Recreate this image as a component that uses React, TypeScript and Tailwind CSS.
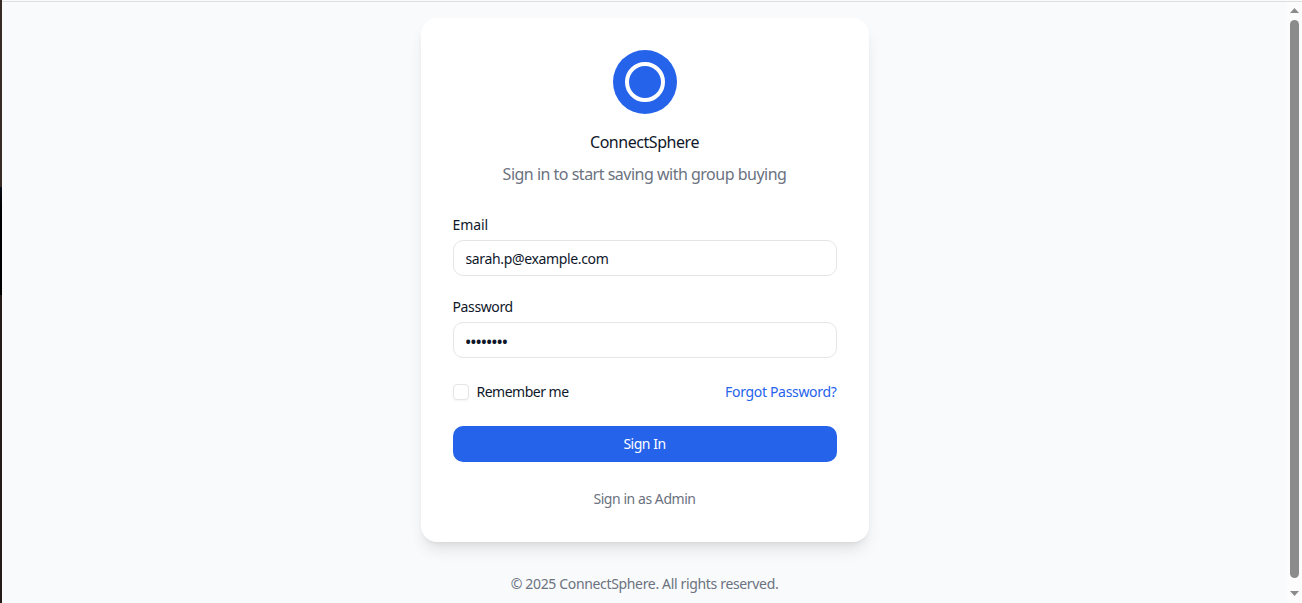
import { useState } from "react";

function ScrollBar() {
  return (
    <div className="flex h-full w-[15px] shrink-0 flex-col items-center bg-[#fcfcfc] pt-[6px]">
      <svg width="9" height="5" viewBox="0 0 9 5" className="shrink-0" fill="#8b8b8b">
        <path d="M4.5 0L9 5H0Z" />
      </svg>
      <div className="mt-[7px] h-[558px] w-[9px] shrink-0 rounded-full bg-[#8b8b8b]" />
      <svg width="9" height="5" viewBox="0 0 9 5" className="mt-[13px] shrink-0" fill="#8b8b8b">
        <path d="M0 0H9L4.5 5Z" />
      </svg>
    </div>
  );
}

type FieldProps = {
  id: string;
  label: string;
  type: string;
  initial: string;
  labelClass: string;
  inputClass: string;
};

function Field({ id, label, type, initial, labelClass, inputClass }: FieldProps) {
  const [value, setValue] = useState(initial);
  return (
    <div className="flex flex-col gap-2">
      <label htmlFor={id} className={`text-sm leading-[14px] ${labelClass}`}>
        {label}
      </label>
      <input
        id={id}
        type={type}
        value={value}
        onChange={(e) => setValue(e.target.value)}
        className={`h-9 w-full rounded-[10px] border border-[#e5e5e5] bg-white px-3 text-sm outline-none focus:border-[#2563eb] ${inputClass}`}
      />
    </div>
  );
}

export default function App() {
  return (
    <div className="flex h-[603px] w-full overflow-hidden bg-[#f9fafb] font-['Noto_Sans',sans-serif] text-[#0f172a]">
      <div className="flex w-[2px] shrink-0 flex-col bg-[#251c19]">
        <div className="h-[187px] bg-[#382a25]" />
        <div className="h-[108px] bg-linear-to-b from-[#0a0f18] to-black to-40%" />
      </div>
      <div className="flex min-w-0 flex-1 flex-col">
        <div className="h-[2px] shrink-0 border-b border-[#dedfe1] bg-[#fafafa]" />
        <div className="flex min-h-0 flex-1">
          <main className="flex min-w-0 flex-1 flex-col items-center pt-4">
            <section className="w-[448px] rounded-2xl bg-white p-8 shadow-lg">
              <header className="flex flex-col items-center">
                <div className="flex size-16 items-center justify-center rounded-full bg-[#2563eb]">
                  <div className="size-10 rounded-full border-4 border-white" />
                </div>
                <h1 className="mt-4 text-base tracking-[-0.45px]">ConnectSphere</h1>
                <p className="mt-2 text-base tracking-[-0.5px] text-[#6b7280]">
                  Sign in to start saving with group buying
                </p>
              </header>
              <form className="mt-8 flex flex-col gap-6" onSubmit={(e) => e.preventDefault()}>
                <Field
                  id="email"
                  label="Email"
                  type="email"
                  initial="sarah.p@example.com"
                  labelClass="tracking-[-0.1px]"
                  inputClass="pt-[5px] pb-1 tracking-[-0.35px]"
                />
                <Field
                  id="password"
                  label="Password"
                  type="password"
                  initial="password"
                  labelClass="tracking-[-0.38px]"
                  inputClass="pt-1.5 pb-1 font-bold"
                />
                <div className="flex h-5 items-center justify-between text-sm">
                  <label className="flex items-center gap-2 tracking-[-0.5px]">
                    <input
                      type="checkbox"
                      className="size-4 appearance-none rounded-[4px] border border-[#e5e5e5] bg-white shadow-xs checked:bg-[#2563eb]"
                    />
                    Remember me
                  </label>
                  <button type="button" className="tracking-[-0.32px] text-[#2563eb]">
                    Forgot Password?
                  </button>
                </div>
                <button
                  type="submit"
                  className="h-9 rounded-[10px] bg-[#2563eb] text-sm tracking-[-0.5px] text-white"
                >
                  Sign In
                </button>
              </form>
              <div className="mt-6 flex h-6 items-center justify-center pt-0.5">
                <button type="button" className="text-sm tracking-[-0.44px] text-[#6b7280]">
                  Sign in as Admin
                </button>
              </div>
            </section>
            <p className="mt-8 text-sm tracking-[-0.34px] text-[#6b7280]">
              © 2025 ConnectSphere. All rights reserved.
            </p>
          </main>
          <ScrollBar />
        </div>
      </div>
    </div>
  );
}
